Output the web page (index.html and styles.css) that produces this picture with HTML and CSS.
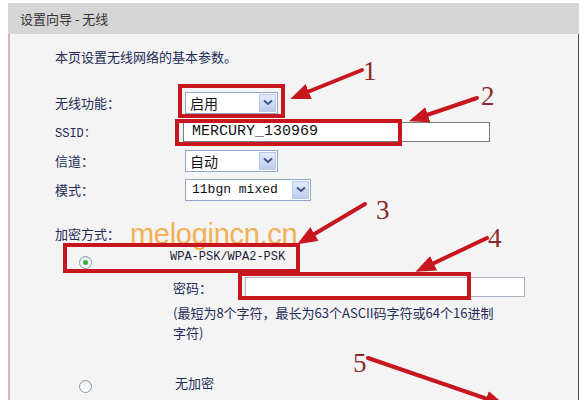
FILE: index.html
```html
<!DOCTYPE html>
<html lang="zh-CN">

<head>
  <meta charset="UTF-8">
  <title>设置向导 - 无线</title>
  <link rel="stylesheet" href="styles.css">
</head>

<body>
  <div class="frame">

    <!-- title bar -->
    <div class="header">设置向导 - 无线</div>

    <div class="panel">
      <p class="intro">本页设置无线网络的基本参数。</p>

      <div class="form-row">
        <span class="label">无线功能：</span>
        <div class="select sel-short">
          <span class="select-value">启用</span>
          <span class="select-btn"><svg width="10" height="7" viewBox="0 0 10 7"><path d="M1 1.5 L5 5 L9 1.5" fill="none" stroke="#3d5585" stroke-width="2"/></svg></span>
        </div>
      </div>

      <div class="form-row">
        <span class="label mono-label">SSID：</span>
        <div class="text-input ssid">MERCURY_130969</div>
      </div>

      <div class="form-row">
        <span class="label">信道：</span>
        <div class="select sel-short">
          <span class="select-value">自动</span>
          <span class="select-btn"><svg width="10" height="7" viewBox="0 0 10 7"><path d="M1 1.5 L5 5 L9 1.5" fill="none" stroke="#3d5585" stroke-width="2"/></svg></span>
        </div>
      </div>

      <div class="form-row">
        <span class="label">模式：</span>
        <div class="select sel-mode">
          <span class="select-value mono">11bgn mixed</span>
          <span class="select-btn"><svg width="10" height="7" viewBox="0 0 10 7"><path d="M1 1.5 L5 5 L9 1.5" fill="none" stroke="#3d5585" stroke-width="2"/></svg></span>
        </div>
      </div>

      <!-- security -->
      <p class="section-label">加密方式：</p>

      <div class="sec-row">
        <span class="radio-cell"><span class="radio checked"></span></span>
        <span class="sec-name">WPA-PSK/WPA2-PSK</span>
      </div>

      <div class="sec-row pass-row">
        <span class="radio-cell"></span>
        <span class="pass-label">密码：</span>
        <div class="text-input pass"></div>
      </div>

      <div class="note">(最短为8个字符，最长为63个ASCII码字符或64个16进制<br>字符)</div>

      <div class="sec-row open-row">
        <span class="radio-cell"><span class="radio"></span></span>
        <span class="open-name">无加密</span>
      </div>
    </div>
  </div>

  <!-- watermark over the page -->
  <div class="watermark">melogincn.cn</div>

  <!-- red annotation marks -->
  <svg class="marks" width="585" height="400" viewBox="0 0 585 400">
    <defs>
      <marker id="head" markerWidth="5" markerHeight="4" refX="1" refY="2" orient="auto" markerUnits="strokeWidth">
        <path d="M0 0 L5 2 L0 4 Z" fill="#c8161e"/>
      </marker>
    </defs>
    <g fill="none" stroke="#c8161e" stroke-width="4">
      <rect x="180" y="86" width="103" height="30"/>
      <rect x="177" y="121" width="223" height="23"/>
      <rect x="65" y="245" width="233" height="26"/>
      <rect x="240" y="274" width="229" height="24"/>
    </g>
    <g stroke="#c8161e" stroke-width="4" stroke-linecap="round" marker-end="url(#head)">
      <line x1="362" y1="70" x2="305" y2="93"/>
      <line x1="477" y1="98" x2="424" y2="116"/>
      <line x1="365" y1="204" x2="311" y2="236"/>
      <line x1="487" y1="238" x2="430" y2="265"/>
      <line x1="368" y1="358" x2="490" y2="400"/>
    </g>
    <g class="num">
      <text x="363" y="80">1</text>
      <text x="481" y="105">2</text>
      <text x="376" y="219">3</text>
      <text x="488" y="247">4</text>
      <text x="353" y="372">5</text>
    </g>
  </svg>
</body>

</html>
```

FILE: styles.css
```css
/* page reset and size of the shot */
body {
  margin: 0;
  width: 585px;
  height: 400px;
  overflow: hidden;
  position: relative;
  background: #ffffff;
  font-family: "Noto Sans CJK SC", "Liberation Sans", sans-serif;
  font-size: 13px;
  color: #232b58;
}

/* outer box of the wizard */
.frame {
  margin: 3px 6px 0 8px;
}

/* grey title bar */
.header {
  height: 31px;
  line-height: 31px;
  padding-left: 12px;
  background: #d6d6d6;
  color: #333333;
  font-size: 13px;
}

/* light content area */
.panel {
  height: 366px;
  padding: 15px 0 0 45px;
  background: #f4f4f4;
  border-left: 2px solid #e2b2b2;
  border-right: 1px solid #4a4a4a;
}

.intro {
  margin: 0 0 23px 0;
  line-height: 16px;
}

/* label + field rows */
.form-row {
  display: grid;
  grid-template-columns: 130px 1fr;
  align-items: center;
  height: 29px;
}

.mono-label {
  font-family: "Liberation Mono", monospace;
  font-size: 12px;
}

/* XP style drop down */
.select {
  display: flex;
  align-items: stretch;
  height: 22px;
  background: #ffffff;
  border: 1px solid #8fa7c9;
  box-sizing: border-box;
}

.sel-short {
  width: 93px;
}

.sel-mode {
  width: 126px;
}

.select-value {
  flex: 1;
  padding-left: 4px;
  line-height: 20px;
  color: #111111;
  font-size: 14px;
}

.select-value.mono {
  font-family: "Liberation Mono", monospace;
  font-size: 13px;
  padding-left: 6px;
}

.select-btn {
  width: 17px;
  margin: 1px;
  display: flex;
  align-items: center;
  justify-content: center;
  background: linear-gradient(#e3ebfa, #bccdee);
  border: 1px solid #b7c8ea;
  box-sizing: border-box;
}

/* text fields */
.text-input {
  height: 20px;
  background: #ffffff;
  border: 1px solid #7a7a7a;
  box-sizing: border-box;
}

.ssid {
  width: 307px;
  margin-left: -2px;
  padding-left: 8px;
  line-height: 18px;
  font-family: "Liberation Mono", monospace;
  font-size: 15px;
  color: #111111;
}

.pass {
  width: 280px;
  border-color: #a9b4c2;
}

/* security section */
.section-label {
  margin: 22px 0 0 0;
  line-height: 16px;
}

.sec-row {
  display: flex;
  align-items: center;
  height: 24px;
  margin-top: 5px;
}

.radio-cell {
  width: 118px;
  padding-left: 24px;
  box-sizing: border-box;
  display: flex;
  align-items: center;
}

.radio {
  width: 13px;
  height: 13px;
  border-radius: 50%;
  border: 1px solid #8a98a6;
  background: linear-gradient(#e8ecef, #ffffff);
  box-sizing: border-box;
  display: flex;
  align-items: center;
  justify-content: center;
  margin-top: 6px;
}

.radio.checked::after {
  content: "";
  width: 5px;
  height: 5px;
  border-radius: 50%;
  background: #3fae3f;
}

.sec-name {
  font-family: "Liberation Mono", monospace;
  font-size: 12px;
  color: #1c1c3a;
  margin-left: -3px;
  margin-top: -4px;
}

.pass-row {
  margin-top: 4px;
}

.pass-label {
  width: 72px;
}

.note {
  margin: 4px 0 0 118px;
  line-height: 20px;
}

.open-row {
  margin-top: 29px;
}

.open-row .radio {
  margin-top: 4px;
}

.open-name {
  margin-left: 2px;
  margin-top: -4px;
}

/* orange watermark lying over the form */
.watermark {
  position: absolute;
  left: 130px;
  top: 218px;
  font-family: "Liberation Sans", sans-serif;
  font-size: 29px;
  color: #f2a33a;
  opacity: 0.85;
  letter-spacing: -0.3px;
}

/* numbered arrows layer */
.marks {
  position: absolute;
  left: 0;
  top: 0;
  pointer-events: none;
}

.num text {
  font-family: "Liberation Serif", serif;
  font-size: 27px;
  fill: #8a2a2a;
}
```
